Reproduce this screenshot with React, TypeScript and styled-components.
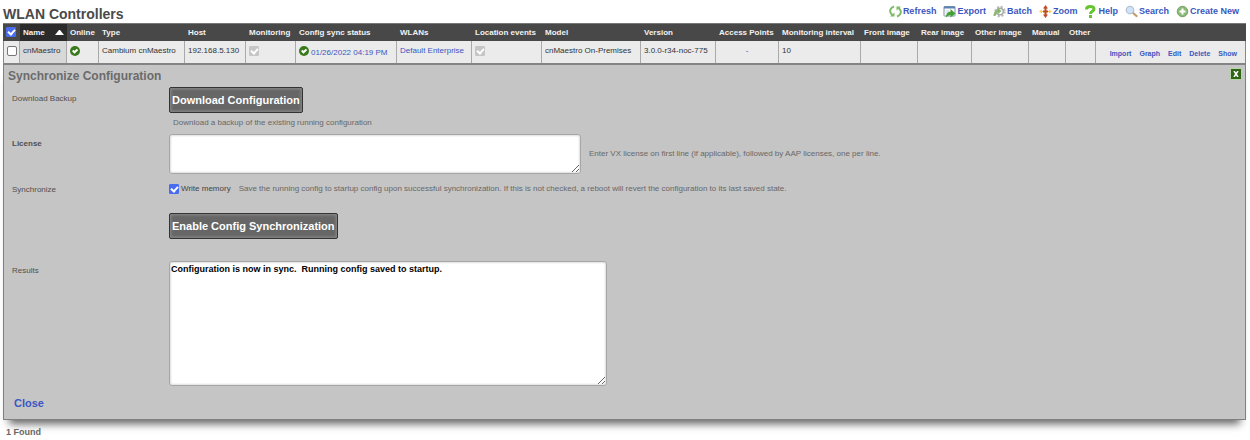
import React from "react";
import styled, { createGlobalStyle } from "styled-components";

const Global = createGlobalStyle`
  *, *::after { box-sizing: border-box; }
  body { margin: 0; background: #fff; font-family: "Liberation Sans", Arial, sans-serif; font-size: 8px; color: #444; }
  a { color: #3a57c2; text-decoration: none; }
`;

const Page = styled.div`
  padding: 3px 4px 0 3px;
`;

const TopBar = styled.header`
  display: flex;
  justify-content: space-between;
  height: 20px;
`;

const Title = styled.h1`
  margin: 0;
  font-size: 14px;
  line-height: 22px;
  color: #4a4a4a;
`;

const Toolbar = styled.nav`
  display: flex;
  align-items: center;
  gap: 7px;
  height: 16px;
  padding-right: 7px;
`;

const Tool = styled.a`
  display: flex;
  align-items: center;
  gap: 1px;
  font-size: 9px;
  font-weight: bold;
  white-space: nowrap;
  svg { width: 13px; height: 13px; }
`;

const Grid = styled.table`
  width: 100%;
  table-layout: fixed;
  border-collapse: separate;
  border-spacing: 0;
`;

const Head = styled.th<{ $sorted?: boolean }>`
  height: 18px;
  padding: 0 0 1px 3px;
  border-top: 1px solid #777;
  background: ${(p) => (p.$sorted ? "#2b2b2b" : "#484848")};
  color: #f2f2f2;
  font-size: 8px;
  text-align: left;
  white-space: nowrap;
`;

const SortLine = styled.span`
  display: flex;
  align-items: center;
  justify-content: space-between;
  padding-right: 3px;
  svg { width: 9px; height: 5px; }
`;

const Cell = styled.td<{ $shade?: boolean; $last?: boolean; $center?: boolean }>`
  height: 22px;
  padding: 0 3px 3px 3px;
  border-right: 1px solid ${(p) => (p.$last ? "#888" : "#a9a9a9")};
  background: ${(p) => (p.$shade ? "#d8d8d8" : "#ebebeb")};
  color: #333;
  text-align: ${(p) => (p.$center ? "center" : "left")};
  white-space: nowrap;
  &:first-child { border-left: 1px solid #888; }
`;

const CellLine = styled.span`
  display: flex;
  align-items: center;
  gap: 2px;
  svg { flex: none; width: 10px; height: 10px; }
  a { padding-top: 3px; }
`;

const Actions = styled.div`
  display: flex;
  justify-content: flex-end;
  gap: 8px;
  padding: 5px 5px 0 0;
  font-size: 7px;
  font-weight: bold;
`;

const Check = styled.input.attrs({ type: "checkbox" })`
  appearance: none;
  display: block;
  flex: none;
  width: 10px;
  height: 10px;
  margin: 0;
  border: 1px solid #777;
  border-radius: 2px;
  background: #fff;
  &:checked { border-radius: 1px; border-color: #4a6cf0; background: #4a6cf0; }
  &:disabled { border-color: #c6c6c6; background: #c6c6c6; }
  &:checked::after {
    content: "";
    display: block;
    width: 5px;
    height: 7px;
    margin: 0 auto;
    border: solid #fff;
    border-width: 0 2px 2px 0;
    transform: rotate(42deg);
  }
`;

const Panel = styled.section`
  padding: 0 8px 9px 4px;
  border: 1px solid #808080;
  border-top: 2px solid #848484;
  background: #c5c5c5;
  box-shadow: 0 10px 8px -6px #666;
`;

const PanelHead = styled.div`
  display: flex;
  justify-content: space-between;
  align-items: flex-start;
  margin-right: -5px;
`;

const PanelTitle = styled.h2`
  margin: 0;
  font-size: 12px;
  line-height: 22px;
  color: #6b6b6b;
`;

const CloseBox = styled.button`
  display: flex;
  align-items: center;
  justify-content: center;
  width: 12px;
  height: 12px;
  margin-top: 3px;
  padding: 0;
  border: 1px solid #b9d3a8;
  background: #2f6516;
  svg { width: 6px; height: 6px; }
`;

const Row = styled.div<{ $gap: number }>`
  display: grid;
  grid-template-columns: 157px 1fr;
  margin-bottom: ${(p) => p.$gap}px;
  padding-left: 4px;
`;

const Label = styled.label<{ $bold?: boolean; $top: number }>`
  padding-top: ${(p) => p.$top}px;
  line-height: 10px;
  font-weight: ${(p) => (p.$bold ? "bold" : "normal")};
  color: #505050;
`;

const Hint = styled.span`
  color: #686868;
  line-height: 10px;
`;

const HintBelow = styled(Hint)`
  display: block;
  padding: 5px 0 0 4px;
`;

const Field = styled.div`
  display: flex;
  align-items: center;
  gap: 8px;
`;

const CheckLabel = styled.label`
  display: flex;
  align-items: center;
  gap: 2px;
  line-height: 10px;
`;

const Button = styled.button`
  display: block;
  height: 26px;
  padding: 0 2px;
  border: 1px solid #333;
  border-radius: 2px;
  background: #666;
  box-shadow: inset 0 0 3px 1px #8c8c8c;
  color: #fff;
  font: bold 11px "Liberation Sans", Arial, sans-serif;
`;

const Area = styled.textarea<{ $w: number; $h: number }>`
  display: block;
  width: ${(p) => p.$w}px;
  max-width: 100%;
  height: ${(p) => p.$h}px;
  padding: 2px 1px;
  border: 1px solid #a6a6a6;
  border-radius: 3px;
  background: #fff;
  box-shadow: inset 0 0 2px 1px #ddd;
  color: #000;
  font: bold 9px "Liberation Sans", Arial, sans-serif;
`;

const CloseLink = styled.a`
  display: inline-block;
  padding-left: 6px;
  font-size: 11px;
  line-height: 14px;
  font-weight: bold;
`;

const Footer = styled.footer`
  position: relative;
  padding: 7px 0 0 3px;
  font-size: 9px;
  line-height: 10px;
  font-weight: bold;
  color: #666;
`;

const OkIcon = () => (
  <svg viewBox="0 0 20 20" role="img" aria-label="OK">
    <circle cx="10" cy="10" r="10" fill="#3b7a1c" />
    <path d="M5.500 9l3.500 3.500 6-5.500" fill="none" stroke="#fff" strokeWidth="4" />
  </svg>
);

const icons: Record<string, React.ReactNode> = {
  Refresh: (
    <svg viewBox="0 0 26 26" fill="none" stroke="#7fbb66" strokeWidth="4">
      <path d="M10 3C4 5 1 10 3 15l4 6" />
      <path d="M16 23c6-2 9-7 7-12l-4-6" />
      <path d="M2 23h9v-8zM24 3h-9v8z" fill="#7fbb66" stroke="none" />
    </svg>
  ),
  Export: (
    <svg viewBox="0 0 26 26">
      <rect x="2" y="3" width="22" height="19" rx="1" fill="#fff" stroke="#7b94a6" strokeWidth="2" />
      <path d="M2 3h22v4H2z" fill="#5f82b5" />
      <path d="M5 12h7M5 16h5" stroke="#c5d2dc" strokeWidth="2" />
      <path d="M6 25c0-8 4-11 9-12V8l10 9-10 8v-5c-4 0-6 2-9 5z" fill="#45a035" />
    </svg>
  ),
  Batch: (
    <svg viewBox="0 0 26 26" fill="none">
      <circle cx="14" cy="13" r="9.500" stroke="#b9b9b9" strokeWidth="4" strokeDasharray="4 3.500" />
      <circle cx="14" cy="13" r="6.500" stroke="#a9a9a9" strokeWidth="3" />
      <path d="M3 22c0-7 3-10 8-10" stroke="#86b56c" strokeWidth="4" />
      <path d="M10 6l7 6-7 6z" fill="#86b56c" />
    </svg>
  ),
  Zoom: (
    <svg viewBox="0 0 26 26">
      <path d="M0 13l6-4v3h14V9l6 4-6 4v-3H6v3z" fill="#f6cf55" />
      <path d="M13 0l5 7h-3v12h3l-5 7-5-7h3V7H8z" fill="#c14a22" />
      <path d="M8 13h10" stroke="#c14a22" strokeWidth="4" />
    </svg>
  ),
  Help: (
    <svg viewBox="0 0 26 26">
      <path d="M5 9c0-5 3-6 7-6s8 1 8 5c0 5-7 4-7 10" fill="none" stroke="#65c42f" strokeWidth="6" />
      <rect x="10" y="20" width="6" height="6" fill="#65c42f" />
    </svg>
  ),
  Search: (
    <svg viewBox="0 0 26 26">
      <path d="M15 15l8 7" stroke="#c39a6b" strokeWidth="4.500" strokeLinecap="round" />
      <circle cx="10" cy="10" r="7.500" fill="#cfe2f8" stroke="#b3c3d6" strokeWidth="2.500" />
    </svg>
  ),
  "Create New": (
    <svg viewBox="0 0 26 26">
      <circle cx="13" cy="13" r="10.500" fill="#8aba76" stroke="#76a266" strokeWidth="2" />
      <path d="M13 7v12M7 13h12" stroke="#fff" strokeWidth="4" />
    </svg>
  ),
};

const columns: [string, number][] = [
  ["Online", 32], ["Type", 86], ["Host", 61], ["Monitoring", 50], ["Config sync status", 101],
  ["WLANs", 75], ["Location events", 70], ["Model", 99], ["Version", 75], ["Access Points", 63],
  ["Monitoring interval", 82], ["Front image", 57], ["Rear image", 54], ["Other image", 57],
  ["Manual", 37], ["Other", 30],
];

export default function App() {
  return (
    <Page>
      <Global />
      <TopBar>
        <Title>WLAN Controllers</Title>
        <Toolbar>
          {Object.keys(icons).map((name) => (
            <Tool href="#" key={name}>{icons[name]}{name}</Tool>
          ))}
        </Toolbar>
      </TopBar>
      <Grid>
        <colgroup>
          <col style={{ width: 17 }} />
          <col style={{ width: 47 }} />
          {columns.map(([name, width]) => <col key={name} style={{ width }} />)}
          <col />
        </colgroup>
        <thead>
          <tr>
            <Head><Check defaultChecked aria-label="Select all" /></Head>
            <Head $sorted>
              <SortLine>Name<svg viewBox="0 0 9 5"><path d="M0 5l4-5h1l4 5z" fill="#fff" /></svg></SortLine>
            </Head>
            {columns.map(([name]) => <Head key={name}>{name}</Head>)}
            <Head aria-label="Actions" />
          </tr>
        </thead>
        <tbody>
          <tr>
            <Cell><Check aria-label="Select cnMaestro" /></Cell>
            <Cell $shade>cnMaestro</Cell>
            <Cell><CellLine><OkIcon /></CellLine></Cell>
            <Cell>Cambium cnMaestro</Cell>
            <Cell>192.168.5.130</Cell>
            <Cell><Check defaultChecked disabled aria-label="Monitoring" /></Cell>
            <Cell><CellLine><OkIcon /><a href="#">01/26/2022 04:19 PM</a></CellLine></Cell>
            <Cell><a href="#">Default Enterprise</a></Cell>
            <Cell><Check defaultChecked disabled aria-label="Location events" /></Cell>
            <Cell>cnMaestro On-Premises</Cell>
            <Cell>3.0.0-r34-noc-775</Cell>
            <Cell $center><a href="#">-</a></Cell>
            <Cell>10</Cell>
            <Cell /><Cell /><Cell /><Cell /><Cell />
            <Cell $last>
              <Actions>
                {["Import", "Graph", "Edit", "Delete", "Show"].map((a) => <a href="#" key={a}>{a}</a>)}
              </Actions>
            </Cell>
          </tr>
        </tbody>
      </Grid>
      <Panel>
        <PanelHead>
          <PanelTitle>Synchronize Configuration</PanelTitle>
          <CloseBox aria-label="Close panel">
            <svg viewBox="0 0 6 6"><path d="M1 0l4 6M5 0L1 6" stroke="#fff" strokeWidth="1.500" /></svg>
          </CloseBox>
        </PanelHead>
        <Row $gap={6}>
          <Label $top={7} htmlFor="download">Download Backup</Label>
          <div>
            <Button id="download">Download Configuration</Button>
            <HintBelow>Download a backup of the existing running configuration</HintBelow>
          </div>
        </Row>
        <Row $gap={9}>
          <Label $bold $top={5} htmlFor="license">License</Label>
          <Field>
            <Area $w={412} $h={40} id="license" />
            <Hint>Enter VX license on first line (if applicable), followed by AAP licenses, one per line.</Hint>
          </Field>
        </Row>
        <Row $gap={18}>
          <Label $top={2} htmlFor="write">Synchronize</Label>
          <Field>
            <CheckLabel><Check id="write" defaultChecked />Write memory</CheckLabel>
            <Hint>Save the running config to startup config upon successful synchronization. If this is not checked, a reboot will revert the configuration to its last saved state.</Hint>
          </Field>
        </Row>
        <Row $gap={22}>
          <span />
          <div><Button>Enable Config Synchronization</Button></div>
        </Row>
        <Row $gap={10}>
          <Label $top={5} htmlFor="results">Results</Label>
          <Area $w={438} $h={125} id="results" defaultValue="Configuration is now in sync.  Running config saved to startup." />
        </Row>
        <CloseLink href="#">Close</CloseLink>
      </Panel>
      <Footer>1 Found</Footer>
    </Page>
  );
}
